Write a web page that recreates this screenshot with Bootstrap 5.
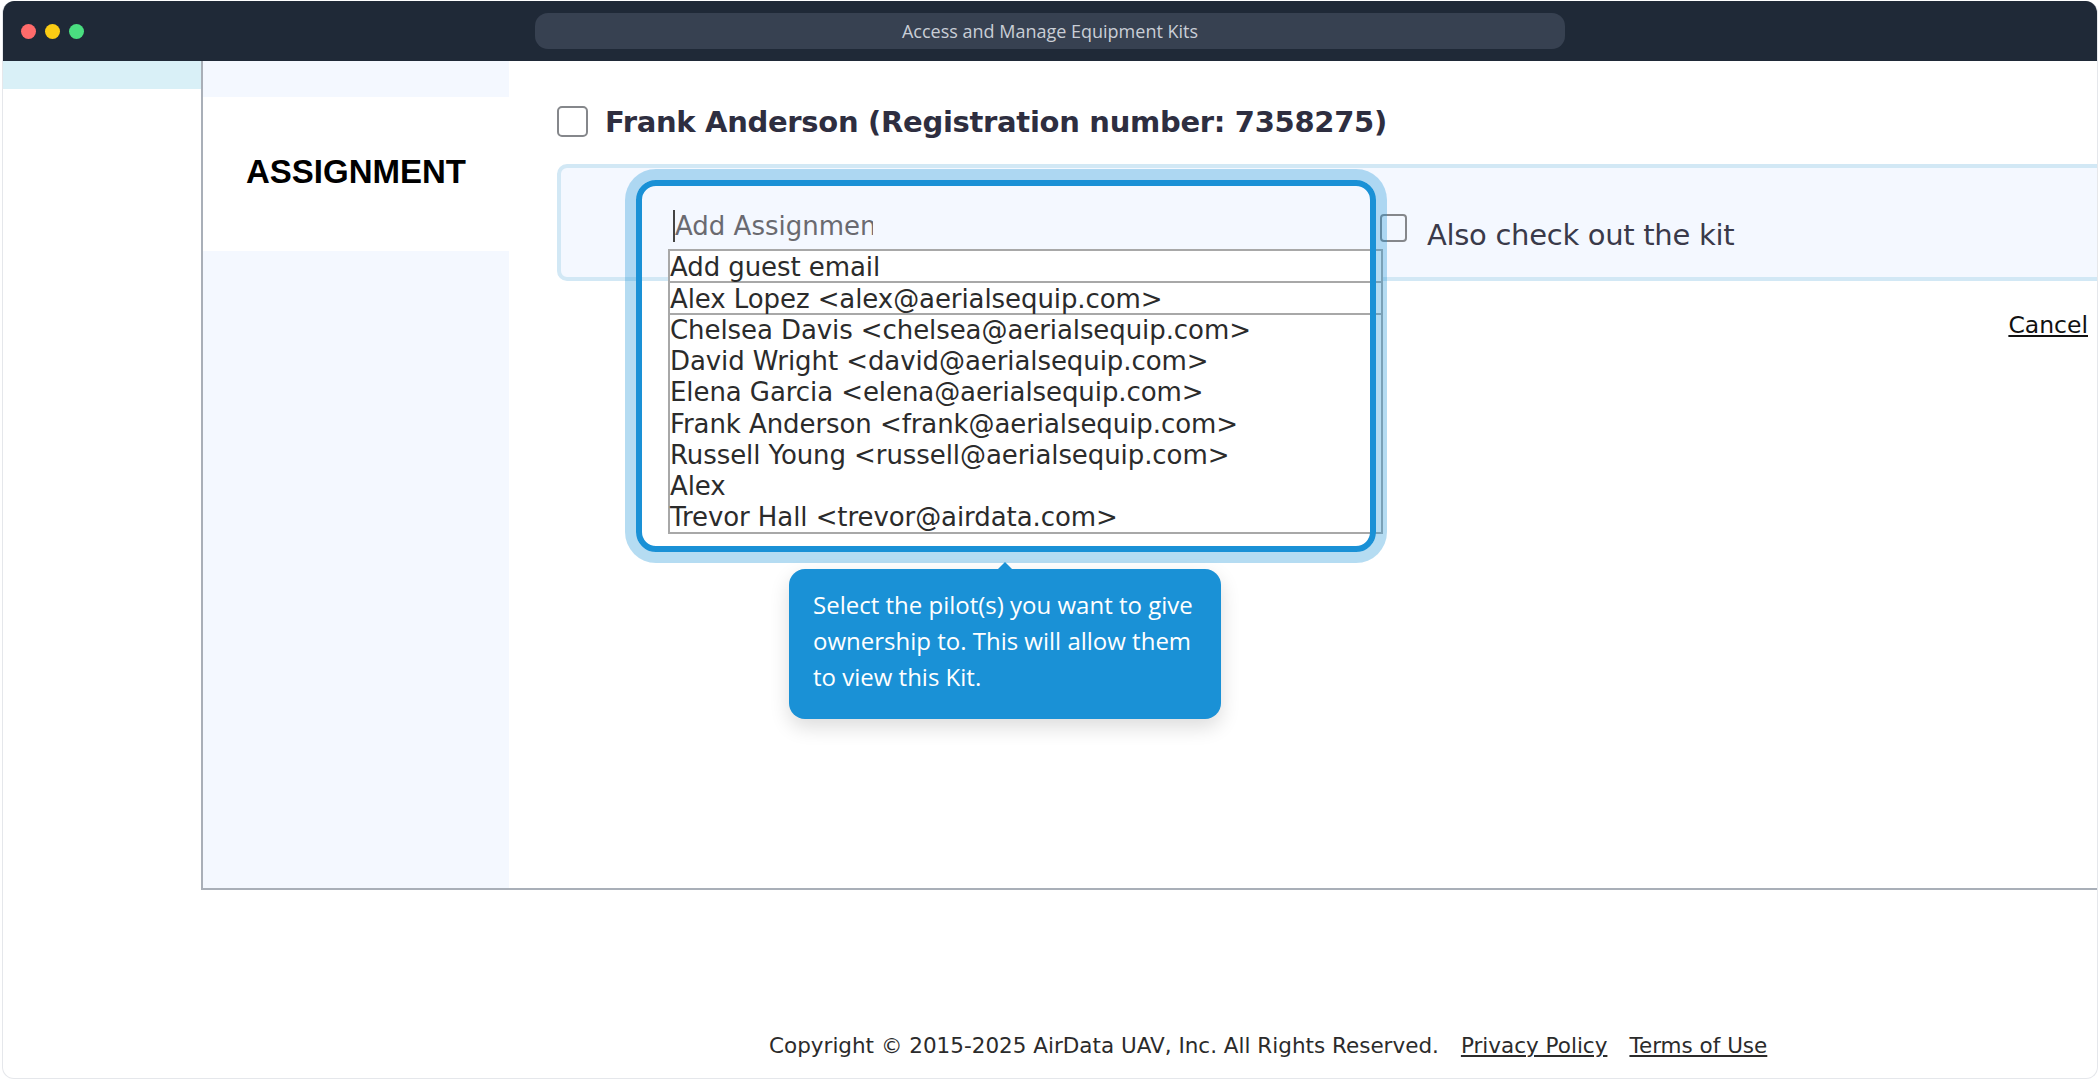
<!DOCTYPE html>
<html lang="en">
<head>
    <meta charset="UTF-8">
    <meta name="viewport" content="width=device-width, initial-scale=1">
    <title>Access and Manage Equipment Kits</title>

    <link rel="stylesheet" href="https://cdn.jsdelivr.net/npm/bootstrap@5.3.0/dist/css/bootstrap.min.css">

    <style>
        html, body { height: 100%; background: #fff; }
        body { padding: 1px 2px 1px 2px; font-family: "DejaVu Sans", sans-serif; overflow: hidden; }

        /* Browser frame */
        .app-window { height: 1078px; border: 1px solid #e5e7eb; border-top: 0; border-radius: 12px; overflow: hidden; }
        .title-bar { height: 60px; background: #1f2937; padding: 0 20px 0 18px; flex-shrink: 0; gap: 9px; }
        .traffic-dot { width: 15px; height: 15px; border-radius: 50%; }
        .url-pill { position: absolute; left: 532px; top: 12px; width: 1030px; height: 36px; border-radius: 13px; background: #374151; color: #c9ced6; font: 18px/36px "Open Sans", sans-serif; }

        /* Page body */
        .left-gutter { width: 198px; flex-shrink: 0; }
        .left-strip { height: 28px; background: #d9f0f7; }
        .panel { height: 829px; border-left: 2px solid #a9afb8; border-bottom: 2px solid #a9afb8; min-width: 0; }
        .side-col { width: 306px; flex-shrink: 0; }
        .side-tint { background: #f4f8ff; }
        .side-top { height: 36px; }
        .side-title { height: 154px; padding-bottom: 5px; font: bold 33px "Liberation Sans", sans-serif; color: #000; }
        .form-col { padding-left: 48px; padding-top: 44px; min-width: 0; }

        .box-check { appearance: none; display: block; background: #fff; border: 2px solid #85878b; flex-shrink: 0; }
        .pilot-check { width: 31px; height: 31px; border-radius: 5px; }
        .kit-check { width: 27px; height: 28px; border-radius: 4px; background: transparent; }
        .pilot-name { font-size: 29px; letter-spacing: -.3px; font-weight: 700; color: #2e2e40; margin-left: 17px; padding-top: 2px; line-height: 31px; white-space: nowrap; }

        .assign-box { height: 117px; margin-top: 26px; margin-right: -12px; background: #f4f8ff; border: 4px solid #d2e8f5; border-radius: 10px; padding-left: 112px; }
        .assign-input { width: 200px; height: 32px; margin-top: 42px; padding: 0; background: transparent; border: 0; border-left: 2px solid #444; border-radius: 0; outline: 0; font-size: 26px; color: #333; }
        .assign-input::placeholder { color: #6a6a70; }
        .kit-check { margin-left: 507px; margin-top: 46px; }
        .kit-label { font-size: 29px; letter-spacing: -.3px; color: #3a3a4a; margin-left: 20px; margin-top: 49px; line-height: 36px; white-space: nowrap; }

        .assign-list { position: absolute; left: 107px; top: 81px; width: 715px; height: 285px; background: #fff; border: 2px solid #a8a8a8; font-size: 26px; letter-spacing: -.08px; line-height: 31.2px; color: #2b2b2b; white-space: nowrap; }
        .assign-item.boxed { border-bottom: 2px solid #a8a8a8; line-height: 32px; height: 32px; }

        /* Tour highlight and tooltip */
        .tour-ring { position: absolute; left: 75px; top: 12px; width: 740px; height: 372px; border: 6px solid #1a91d6; border-radius: 20px; box-shadow: 0 0 0 11px rgba(26, 145, 214, .32); pointer-events: none; }
        .tour-tip { position: absolute; left: 228px; top: 401px; width: 432px; height: 150px; padding: 18px 24px; background: #1a91d6; color: #fff; border-radius: 16px; font: 24px/36px "Open Sans", sans-serif; box-shadow: 0 8px 20px rgba(0, 0, 0, .14); }
        .tour-tip::before { content: ""; position: absolute; left: 209px; top: -7px; border-left: 7px solid transparent; border-right: 7px solid transparent; border-bottom: 7px solid #1a91d6; }

        .cancel-row { padding: 28px 9px 0 0; font-size: 23.5px; line-height: 32px; }
        .cancel-row a { color: #111; }

        .page-foot { padding-left: 766px; padding-top: 141px; font-size: 21.5px; line-height: 30px; color: #2b2b2b; white-space: nowrap; }
        .page-foot a { color: #2b2b2b; margin-left: 22px; }
    </style>
</head>
<body>

<div class="app-window d-flex flex-column position-relative">
    <!-- Title bar -->
    <div class="title-bar d-flex align-items-center">
        <span class="traffic-dot" style="background:#ff6b6b"></span>
        <span class="traffic-dot" style="background:#fbcc14"></span>
        <span class="traffic-dot" style="background:#4ade80"></span>
        <div class="url-pill text-center">Access and Manage Equipment Kits</div>
    </div>

    <div class="d-flex">
        <div class="left-gutter"><div class="left-strip"></div></div>

        <div class="panel d-flex flex-grow-1">
            <div class="side-col d-flex flex-column">
                <div class="side-tint side-top"></div>
                <div class="side-title d-flex align-items-center justify-content-center">ASSIGNMENT</div>
                <div class="side-tint flex-grow-1"></div>
            </div>

            <div class="form-col flex-grow-1">
                <div class="d-flex align-items-center">
                    <input type="checkbox" class="box-check pilot-check">
                    <span class="pilot-name">Frank Anderson (Registration number: 7358275)</span>
                </div>

                <div class="assign-box d-flex align-items-start position-relative">
                    <input type="text" class="assign-input" placeholder="Add Assignment">
                    <input type="checkbox" class="box-check kit-check">
                    <span class="kit-label">Also check out the kit</span>

                    <div class="assign-list">
                        <div class="assign-item boxed">Add guest email</div>
                        <div class="assign-item boxed">Alex Lopez &lt;alex@aerialsequip.com&gt;</div>
                        <div class="assign-item">Chelsea Davis &lt;chelsea@aerialsequip.com&gt;</div>
                        <div class="assign-item">David Wright &lt;david@aerialsequip.com&gt;</div>
                        <div class="assign-item">Elena Garcia &lt;elena@aerialsequip.com&gt;</div>
                        <div class="assign-item">Frank Anderson &lt;frank@aerialsequip.com&gt;</div>
                        <div class="assign-item">Russell Young &lt;russell@aerialsequip.com&gt;</div>
                        <div class="assign-item">Alex</div>
                        <div class="assign-item">Trevor Hall &lt;trevor@airdata.com&gt;</div>
                    </div>
                    <div class="tour-ring"></div>
                    <div class="tour-tip">Select the pilot(s) you want to give ownership to. This will allow them to view this Kit.</div>
                </div>

                <div class="cancel-row text-end"><a href="#">Cancel</a></div>
            </div>
        </div>
    </div>

    <div class="page-foot">Copyright © 2015-2025 AirData UAV, Inc. All Rights Reserved.<a href="#">Privacy Policy</a><a href="#">Terms of Use</a></div>
</div>

<script src="https://cdn.jsdelivr.net/npm/bootstrap@5.3.0/dist/js/bootstrap.bundle.min.js"></script>
</body>
</html>
